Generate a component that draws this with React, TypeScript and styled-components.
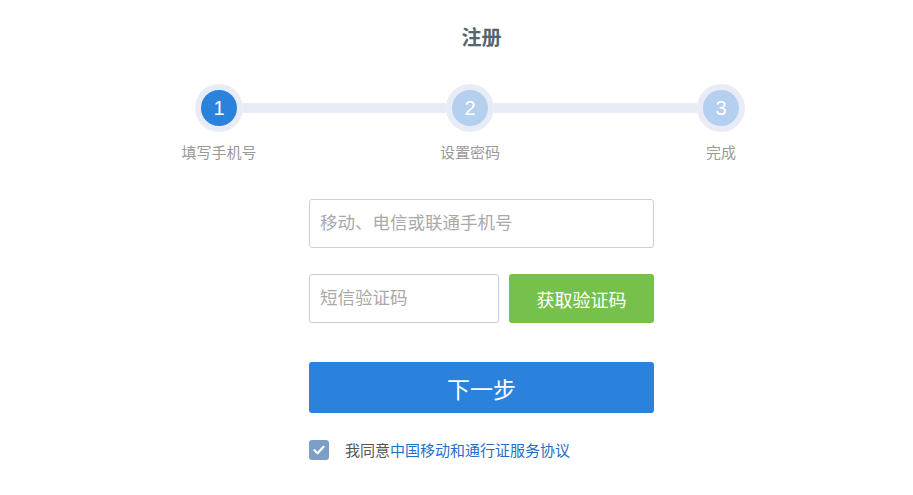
import React from 'react';
import styled, { createGlobalStyle } from 'styled-components';

const GlobalStyle = createGlobalStyle`
  html, body {
    margin: 0;
    padding: 0;
    background: #fff;
    font-family: "Liberation Sans", "Noto Sans CJK SC", sans-serif;
  }
  * {
    box-sizing: border-box;
  }
`;

const steps = ['填写手机号', '设置密码', '完成'];

const App = () => {
  return (
    <Page>
      <GlobalStyle />
      <Column>
        <Title>注册</Title>
        <Stepper>
          {steps.map((label, i) => (
            <React.Fragment key={label}>
              {i > 0 && <Track />}
              <Step>
                <Ring>
                  <Dot active={i === 0}>{i + 1}</Dot>
                </Ring>
                <StepLabel>{label}</StepLabel>
              </Step>
            </React.Fragment>
          ))}
        </Stepper>
        <Form>
          <Input placeholder="移动、电信或联通手机号" />
          <Row>
            <Input placeholder="短信验证码" short />
            <CodeButton>获取验证码</CodeButton>
          </Row>
          <NextButton>下一步</NextButton>
          <Agree>
            <CheckBox>
              <svg width="14" height="14" viewBox="0 0 14 14">
                <path d="M2.5 7.2 L5.6 10.2 L11.5 3.8" fill="none" stroke="#fff" strokeWidth="2.2" strokeLinecap="round" strokeLinejoin="round" />
              </svg>
            </CheckBox>
            <AgreeText>
              我同意<Link>中国移动和通行证服务协议</Link>
            </AgreeText>
          </Agree>
        </Form>
      </Column>
    </Page>
  );
};

export default App;

const Page = styled('div')`
  width: 913px;
  height: 495px;
  padding-left: 309px;
  padding-top: 25px;
`;

const Column = styled('div')`
  width: 345px;
  display: flex;
  flex-direction: column;
`;

const Title = styled('h1')`
  margin: 0;
  font-size: 20px;
  line-height: 26px;
  font-weight: bold;
  color: #55646f;
  text-align: center;
`;

const Stepper = styled('div')`
  display: flex;
  align-items: flex-start;
  width: 550px;
  margin-left: -114px;
  margin-top: 33px;
`;

const Step = styled('div')`
  width: 48px;
  display: flex;
  flex-direction: column;
  align-items: center;
`;

const Ring = styled('div')`
  width: 48px;
  height: 48px;
  border-radius: 50%;
  background: #e8ecf6;
  display: flex;
  align-items: center;
  justify-content: center;
`;

const Dot = styled('div')<{ active?: boolean }>`
  width: 36px;
  height: 36px;
  border-radius: 50%;
  background: ${(p) => (p.active ? '#2a82dc' : '#b5cfef')};
  color: #fff;
  font-size: 20px;
  display: flex;
  align-items: center;
  justify-content: center;
`;

const Track = styled('div')`
  flex: 1;
  height: 10px;
  margin-top: 19px;
  background: #e8ecf6;
`;

const StepLabel = styled('div')`
  margin-top: 11px;
  font-size: 15px;
  line-height: 20px;
  color: #999;
  white-space: nowrap;
`;

const Form = styled('div')`
  display: flex;
  flex-direction: column;
  margin-top: 36px;
`;

const Input = styled('input')<{ short?: boolean }>`
  width: ${(p) => (p.short ? '190px' : '100%')};
  height: 49px;
  border: 1px solid #c6d0e2;
  border-radius: 3px;
  padding: 0 10px;
  font-size: 17.5px;
  font-family: inherit;
  color: #333;
  outline: none;
  &::placeholder {
    color: #a9a9a9;
  }
`;

const Row = styled('div')`
  display: flex;
  justify-content: space-between;
  margin-top: 26px;
`;

const CodeButton = styled('button')`
  width: 145px;
  height: 49px;
  border: none;
  border-radius: 3px;
  background: #76c14c;
  color: #fff;
  font-size: 18px;
  font-family: inherit;
`;

const NextButton = styled('button')`
  margin-top: 39px;
  height: 51px;
  width: 100%;
  border: none;
  border-radius: 3px;
  background: #2a82dc;
  color: #fff;
  font-size: 23px;
  font-family: inherit;
`;

const Agree = styled('div')`
  display: flex;
  align-items: center;
  margin-top: 26px;
`;

const CheckBox = styled('span')`
  width: 20px;
  height: 20px;
  border-radius: 3px;
  background: #7e9fc5;
  display: flex;
  align-items: center;
  justify-content: center;
`;

const AgreeText = styled('span')`
  margin-left: 16px;
  font-size: 15px;
  color: #555;
`;

const Link = styled('a')`
  color: #1f6fc8;
  text-decoration: none;
`;
